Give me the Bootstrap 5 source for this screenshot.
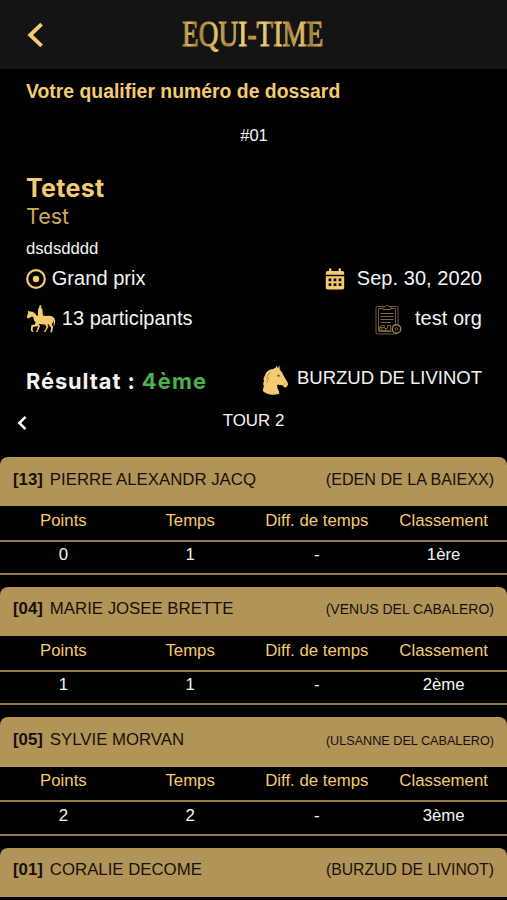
<!DOCTYPE html>
<html lang="fr">
<head>
<meta charset="utf-8">
<meta name="viewport" content="width=device-width, initial-scale=1">
<title>Equi-Time</title>
<link href="https://cdn.jsdelivr.net/npm/bootstrap@5.3.0/dist/css/bootstrap.min.css" rel="stylesheet">
<style>
  :root { --gold: #f6ca70; --tan: #b29459; }
  body { background: #000; color: #f4f4f4; font-family: "Liberation Sans", Arial, sans-serif; line-height: 1; overflow: hidden; height: 900px; }
  svg { display: block; flex: none; }
  .topbar { height: 69px; background: #141414; padding: 0 26px; }
  .topbar .side { width: 20px; }
  .gold { color: var(--gold); }
  .intro { padding: 0 25px 0 26px; white-space: nowrap; }
  .qualif { font-size: 19.4px; line-height: 22px; padding-top: 11px; }
  .bib { font-size: 16.5px; line-height: 20px; padding: 23px 0 1px 0; }
  .ui { font-family: Inter, sans-serif; }
  .event-name { font-size: 25px; line-height: 30px; margin-top: 27px; letter-spacing: .3px; }
  .event-sub { font-size: 21.5px; line-height: 26px; color: #cfa95d; }
  .event-desc { font-size: 16.7px; line-height: 20px; margin-top: 10px; }
  .info { font-size: 20px; height: 40px; letter-spacing: .05px; }
  .info span { padding-bottom: 2px; }
  .org-name { margin-left: 5px; }
  .result { height: 45px; margin-top: 20px; }
  .result-text { font-size: 21.8px; letter-spacing: .95px; }
  .rank { color: #4caf50; letter-spacing: 1.2px; }
  .horse-name { font-size: 18.5px; padding-bottom: 6px; }
  .tour { height: 37px; font-size: 16.9px; padding: 0 17px; margin-bottom: 15.5px; }
  .tour svg { margin-top: 1px; }
  .tour span { padding-bottom: 3px; }
  .tour .end { width: 10px; }
  .entry { margin-bottom: 12px; height: 118.4px; }
  .entry-row, .entry-head { font-size: 16.8px; }
  .entry-head { height: 49.5px; background: var(--tan); color: #17110a; border-radius: 8px 8px 0 0; padding: 14.4px 13px 0; white-space: nowrap; }
  .entry-row { display: grid; grid-template-columns: repeat(4, 1fr); text-align: center; white-space: nowrap; border-bottom: 2px solid #947b4b; align-items: center; }
  .labels { height: 35.5px; color: var(--gold); padding-bottom: 3.600px; }
  .values { height: 33.5px; padding-bottom: 4px; }
  .num { font-weight: 700; margin-right: 7px; }
  .fit-1 { font-size: 16.1px; }
  .fit-2 { font-size: 14px; }
  .fit-3 { font-size: 12.65px; }
  .fit-4 { font-size: 15.75px; }
</style>
<script src="https://cdn.jsdelivr.net/npm/bootstrap@5.3.0/dist/js/bootstrap.bundle.min.js"></script>
</head>
<body>
<header class="topbar d-flex align-items-center justify-content-between">
  <div class="side">
    <svg width="20" height="26" viewBox="0 0 20 26"><path d="M15.600 2.200 4.200 13l11.400 10.800" fill="none" stroke="#f6ca70" stroke-width="3.800"/></svg>
  </div>
  <svg width="180" height="50" viewBox="-19 -5 180 50">
    <defs>
      <linearGradient id="shine" gradientUnits="userSpaceOnUse" x1="0" y1="0" x2="144" y2="0" gradientTransform="scale(1.287 1)">
        <stop offset="0" stop-color="#957434"/><stop offset=".05" stop-color="#dfbb62"/><stop offset=".1" stop-color="#a07e39"/>
        <stop offset=".17" stop-color="#b9964a"/><stop offset=".24" stop-color="#e8c46c"/><stop offset=".31" stop-color="#a5823c"/>
        <stop offset=".42" stop-color="#f3d27b"/><stop offset=".47" stop-color="#b18e43"/><stop offset=".52" stop-color="#c9a552"/>
        <stop offset=".57" stop-color="#f0ce77"/><stop offset=".63" stop-color="#a5823c"/><stop offset=".68" stop-color="#f3d27b"/>
        <stop offset=".74" stop-color="#a5823c"/><stop offset=".83" stop-color="#e6c26b"/><stop offset=".89" stop-color="#a07e39"/>
        <stop offset=".95" stop-color="#cda953"/><stop offset="1" stop-color="#957434"/>
      </linearGradient>
    </defs>
    <text transform="translate(-1 31) scale(.777 1)" x="0" y="0" font-family="Liberation Serif, serif" font-size="35" textLength="182" lengthAdjust="spacing" fill="url(#shine)" stroke="url(#shine)" stroke-width="1">EQUI-TIME</text>
  </svg>
  <div class="side"></div>
</header>

<main>
  <section class="intro">
    <div class="qualif gold fw-bold">Votre qualifier numéro de dossard</div>
    <div class="bib text-center">#01</div>
    <h1 class="event-name ui gold fw-bold mb-0">Tetest</h1>
    <div class="event-sub ui">Test</div>
    <div class="event-desc">dsdsdddd</div>
    <div class="info d-flex justify-content-between align-items-center">
      <div class="d-flex align-items-center">
        <svg width="20" height="20" viewBox="0 0 20 20"><circle cx="10" cy="10" r="8.800" fill="none" stroke="#f6ca70" stroke-width="2.200"/><circle cx="10" cy="10" r="3.200" fill="#f6ca70"/></svg>
        <span class="ms-1">&#8202;Grand prix</span>
      </div>
      <div class="d-flex align-items-center">
        <svg class="me-2" width="20" height="22" viewBox="0 0 20 22"><path fill="#f6ca70" fill-rule="evenodd" d="M4 1.500a1.200 1.200 0 0 1 2.400 0V3h7.200V1.500a1.200 1.200 0 0 1 2.400 0V3h1.500A1.700 1.700 0 0 1 19.200 4.700V6.800H.8V4.700A1.700 1.700 0 0 1 2.500 3H4zM.8 8.200h18.400v11.600a1.700 1.700 0 0 1-1.700 1.700h-15A1.700 1.700 0 0 1 .8 19.800zM3.600 10.400v2.800h2.800v-2.800zm5 0v2.800h2.800v-2.800zm5 0v2.800h2.800v-2.800zM3.600 15.300v2.800h2.800v-2.800zm5 0v2.800h2.800v-2.800zm5 0v2.800h2.800v-2.800z"/></svg>
        <span class="ms-1">Sep. 30, 2020</span>
      </div>
    </div>
    <div class="info d-flex justify-content-between align-items-center">
      <div class="d-flex align-items-center">
        <svg width="30" height="28" viewBox="0 0 30 28"><g fill="#f6ca70"><path d="M13.200 1.200c.2-1.400 2.100-1.400 2.200 0 .1.900-.2 1.300-.5 1.700 1.100.3 1.500 1 1.600 2.400l.4 5.300c2.700.6 5.500 0 7.800.3 2.600.4 4 2.300 4.400 4.500.2 2.200-.3 4.500-1.300 6.100-.3-1.800.2-4.300-.5-6.600-.1 2.100-.6 3.100-1.700 4.200l1.500 3-1.100 5.200h-1.700l.8-4.900-3-3.500c-3 .8-6.200.8-9.100-.1l-2.100 2.700-3.800.2-.6 3.400 1.200 1.600-1.500.3-1.500-1.700.7-5.200 3.400-.5 1-2C8.200 16 7.600 14.600 7.400 12.300l-1.500-.7-3.600 2L.8 12.500l1.300-4.400-.3-2.700 1.700 1.100c3.300-.5 5.600 1.400 7.200 4.300l1.300-.2V5.500c0-1.600.2-2.300 1.200-2.600z"/><path d="m12 17.500 2 3.600-2.300 5.600-1.900.4.200-1 1-.6.900-4-2.200-2.400zM20.500 17l2 4.400-2.800 5.300-1.800.3.100-.9 1-.6 1.500-3.900-2.800-3.400z"/></g></svg>
        <span class="ms-1">&#8202;13 participants</span>
      </div>
      <div class="d-flex align-items-center">
        <svg class="me-2" width="27" height="31" viewBox="0 0 27 31"><g fill="none" stroke="#806736" stroke-width=".9"><path d="M8 2.500H2.500Q1 2.500 1 4v24.500q0 1.500 1.500 1.500h19M16 2.500h5.500Q23 2.500 23 4v16M8 4.500H3.500v23H17M16 4.500h4.500V20"/><path d="M8 5.500v-3h2q2-3 4 0h2v3z"/><path stroke-width="1.200" d="M5.500 9.500h13M5.500 12.500h13M5.500 15.500h13M5.500 18.500h10"/><path d="M4.500 23.500h5v-2H7q-2 0-2.500 2v3h11v-5h-3v3h-3M5 25h3m2 1 3-3"/><circle stroke="#a28243" stroke-width="1.400" cx="21.500" cy="25" r="4.200"/><circle cx="21.500" cy="25" r="1.300"/></g></svg>
        <span class="org-name">test org</span>
      </div>
    </div>
    <div class="result d-flex justify-content-between align-items-center">
      <div class="result-text ui fw-bold">Résultat : <span class="rank">4ème</span></div>
      <div class="d-flex align-items-center">
        <svg class="mb-1" width="28" height="30" viewBox="0 0 28 30"><path fill="#f6ca70" d="M12.200 4C13 3.300 13.600 2.900 14.300 2.900L15.800.8l1.100 2.400L18.300.3l.6 4.600c1.600 1.200 2.600 2.800 3.200 4.800l4.400 7.500c.7 1.400.6 2.800-.2 3.800L24.600 22.500c-1 .2-1.900-.2-2.400-1.200L21.400 20.300c-1.900 0-3.400-.2-5-.7-.5 2.500.1 4.600 1.500 6.700.5.700.5 1.500.1 2.400-2.300 1-4.700 1.200-7.200 1-3.700-.4-6.600-1.400-8.900-3.400 0-2.700.9-4.700 1.400-6.900L2.200 20.500c-.1-2.100.5-3.800 1.100-5.600l-.8.200c.2-2.600 1.200-4.600 2.500-6.300L4 9.400C5.800 6.100 8.500 4.200 12.200 4z"/><circle cx="17.500" cy="10.700" r="1.100" fill="#5b431a"/><path d="m22.500 19.600 2.200-.9M9 7.400Q6 10.500 5.500 13.800m2.500-1q-2 2.700-2 5" fill="none" stroke="#86672d" stroke-width=".6"/></svg>
        <span class="horse-name ms-2">BURZUD DE LIVINOT</span>
      </div>
    </div>
  </section>

  <nav class="tour d-flex justify-content-between align-items-center">
    <svg width="10" height="16" viewBox="0 0 10 16"><path d="M8.500 1.800 2.300 8l6.200 6.200" fill="none" stroke="#fff" stroke-width="2.500"/></svg>
    <span>TOUR 2</span>
    <span class="end"></span>
  </nav>

  <section>
    <article class="entry">
      <div class="entry-head d-flex align-items-baseline justify-content-between"><div><span class="num">[13]</span>PIERRE ALEXANDR JACQ</div><div class="fit-1">(EDEN DE LA BAIEXX)</div></div>
      <div class="entry-row labels"><span>Points</span><span>Temps</span><span>Diff. de temps</span><span>Classement</span></div>
      <div class="entry-row values"><span>0</span><span>1</span><span>-</span><span>1ère</span></div>
    </article>
    <article class="entry">
      <div class="entry-head d-flex align-items-baseline justify-content-between"><div><span class="num">[04]</span>MARIE JOSEE BRETTE</div><div class="fit-2">(VENUS DEL CABALERO)</div></div>
      <div class="entry-row labels"><span>Points</span><span>Temps</span><span>Diff. de temps</span><span>Classement</span></div>
      <div class="entry-row values"><span>1</span><span>1</span><span>-</span><span>2ème</span></div>
    </article>
    <article class="entry">
      <div class="entry-head d-flex align-items-baseline justify-content-between"><div><span class="num">[05]</span>SYLVIE MORVAN</div><div class="fit-3">(ULSANNE DEL CABALERO)</div></div>
      <div class="entry-row labels"><span>Points</span><span>Temps</span><span>Diff. de temps</span><span>Classement</span></div>
      <div class="entry-row values"><span>2</span><span>2</span><span>-</span><span>3ème</span></div>
    </article>
    <article>
      <div class="entry-head d-flex align-items-baseline justify-content-between"><div><span class="num">[01]</span>CORALIE DECOME</div><div class="fit-4">(BURZUD DE LIVINOT)</div></div>
    </article>
  </section>
</main>
</body>
</html>
